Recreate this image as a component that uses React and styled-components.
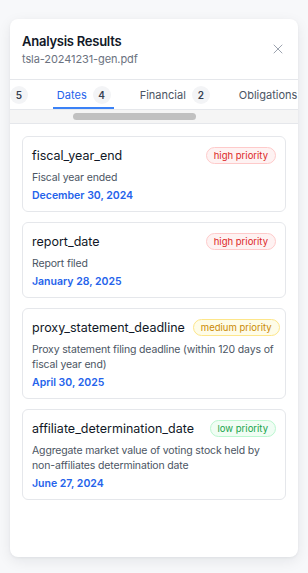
import React, { useLayoutEffect, useRef, useState } from "react";
import styled, { createGlobalStyle } from "styled-components";
import { X } from "lucide-react";

const GlobalStyle = createGlobalStyle`
  html, body {
    margin: 0;
    padding: 0;
    background: #f7f8fa;
    font-family: Inter, "Noto Sans", "Liberation Sans", sans-serif;
    -webkit-font-smoothing: antialiased;
  }
  * { box-sizing: border-box; }
`;

const Page = styled.div`
  padding: 19px 10px 16px;
`;

const Panel = styled.div`
  background: #ffffff;
  border-radius: 8px;
  box-shadow: 0 4px 14px rgba(15, 23, 42, 0.08), 0 1px 3px rgba(15, 23, 42, 0.05);
  height: 538px;
  display: flex;
  flex-direction: column;
  overflow: hidden;
`;

const Header = styled.div`
  display: flex;
  align-items: center;
  justify-content: space-between;
  padding: 12px;
  border-bottom: 1px solid #e5e7eb;
`;

const Title = styled.h2`
  margin: 0;
  font-size: 13px;
  letter-spacing: -0.25px;
  line-height: 20px;
  font-weight: 600;
  color: #111827;
`;

const FileName = styled.div`
  font-size: 11px;
  letter-spacing: -0.1px;
  line-height: 16px;
  color: #6b7280;
`;

const CloseButton = styled.button`
  border: 0;
  background: none;
  padding: 0;
  color: #9ca3af;
  display: flex;
  cursor: pointer;
`;

const TabScroller = styled.div`
  overflow-x: auto;
  scrollbar-width: none;
  border-bottom: 1px solid #e5e7eb;
  &::-webkit-scrollbar {
    display: none;
  }
`;

const TabStrip = styled.div`
  display: flex;
  gap: 22px;
  width: max-content;
  padding: 0 12px;
`;

const Tab = styled.div`
  display: flex;
  align-items: center;
  gap: 6px;
  height: 29px;
  padding: 2px 3px 0 4px;
  font-size: 11px;
  white-space: nowrap;
  color: ${(p) => (p.$active ? "#2563eb" : "#4b5563")};
  border-bottom: 2px solid ${(p) => (p.$active ? "#3b82f6" : "transparent")};
`;

const Count = styled.span`
  display: inline-flex;
  align-items: center;
  justify-content: center;
  min-width: 18px;
  height: 18px;
  border-radius: 9px;
  background: #f3f4f6;
  color: #374151;
  font-size: 10px;
  font-weight: 600;
`;

const ScrollTrack = styled.div`
  height: 14px;
  background: #f5f5f5;
  border-bottom: 1px solid #e5e7eb;
  padding: 3px 0 0;
`;

const ScrollThumb = styled.div`
  height: 7px;
  border-radius: 4px;
  background: #c1c1c1;
`;

const List = styled.div`
  display: flex;
  flex-direction: column;
  gap: 10px;
  padding: 12px;
`;

const Card = styled.div`
  border: 1px solid #e5e7eb;
  border-radius: 6px;
  padding: 10px 9px 8px;
`;

const CardHead = styled.div`
  display: flex;
  align-items: center;
  justify-content: space-between;
  gap: 8px;
`;

const Name = styled.div`
  font-size: 12.5px;
  line-height: 17px;
  color: #111827;
`;

const colors = {
  high: { bg: "#fef2f2", border: "#fecaca", text: "#dc2626" },
  medium: { bg: "#fefce8", border: "#fde68a", text: "#ca8a04" },
  low: { bg: "#f0fdf4", border: "#bbf7d0", text: "#16a34a" },
};

const Priority = styled.span`
  flex-shrink: 0;
  font-size: 9.5px;
  line-height: 15px;
  padding: 0 7px;
  border-radius: 9px;
  background: ${(p) => colors[p.$level].bg};
  border: 1px solid ${(p) => colors[p.$level].border};
  color: ${(p) => colors[p.$level].text};
`;

const Desc = styled.div`
  margin-top: 6px;
  font-size: 10.5px;
  letter-spacing: -0.15px;
  line-height: 15px;
  color: #4b5563;
`;

const DateText = styled.div`
  margin-top: 4px;
  font-size: 10.5px;
  line-height: 14px;
  font-weight: 600;
  color: #2563eb;
`;

const tabs = [
  { label: "Entities", count: 3 },
  { label: "Parties", count: 5 },
  { label: "Dates", count: 4, active: true },
  { label: "Financial", count: 2 },
  { label: "Obligations", count: 6 },
  { label: "Risk Factors", count: 3 },
  { label: "Terms", count: 2 },
];

const items = [
  { name: "fiscal_year_end", level: "high", desc: "Fiscal year ended", date: "December 30, 2024" },
  { name: "report_date", level: "high", desc: "Report filed", date: "January 28, 2025" },
  {
    name: "proxy_statement_deadline",
    level: "medium",
    desc: "Proxy statement filing deadline (within 120 days of fiscal year end)",
    date: "April 30, 2025",
  },
  {
    name: "affiliate_determination_date",
    level: "low",
    desc: "Aggregate market value of voting stock held by non-affiliates determination date",
    date: "June 27, 2024",
  },
];

export default function App() {
  const scrollRef = useRef(null);
  const activeRef = useRef(null);
  const [thumb, setThumb] = useState({ left: 0, width: 0 });

  useLayoutEffect(() => {
    const el = scrollRef.current;
    const tab = activeRef.current;
    if (!el || !tab) return;
    el.scrollLeft = tab.offsetLeft - el.offsetLeft - 43;
    const ratio = el.clientWidth / el.scrollWidth;
    setThumb({
      left: el.scrollLeft * ratio,
      width: el.clientWidth * ratio,
    });
  }, []);

  return (
    <>
      <GlobalStyle />
      <Page>
        <Panel>
          <Header>
            <div>
              <Title>Analysis Results</Title>
              <FileName>tsla-20241231-gen.pdf</FileName>
            </div>
            <CloseButton aria-label="Close">
              <X size={16} strokeWidth={1.5} />
            </CloseButton>
          </Header>
          <TabScroller ref={scrollRef}>
            <TabStrip>
              {tabs.map((t) => (
                <Tab key={t.label} $active={t.active} ref={t.active ? activeRef : null}>
                  {t.label}
                  {t.count != null && <Count>{t.count}</Count>}
                </Tab>
              ))}
            </TabStrip>
          </TabScroller>
          <ScrollTrack>
            <ScrollThumb style={{ marginLeft: thumb.left, width: thumb.width }} />
          </ScrollTrack>
          <List>
            {items.map((it) => (
              <Card key={it.name}>
                <CardHead>
                  <Name>{it.name}</Name>
                  <Priority $level={it.level}>{it.level} priority</Priority>
                </CardHead>
                <Desc>{it.desc}</Desc>
                <DateText>{it.date}</DateText>
              </Card>
            ))}
          </List>
        </Panel>
      </Page>
    </>
  );
}
